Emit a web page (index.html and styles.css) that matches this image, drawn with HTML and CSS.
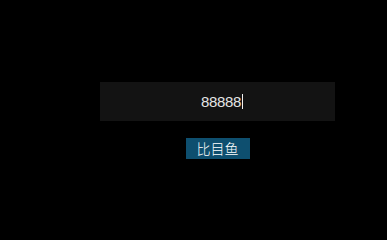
FILE: index.html
```html
<!DOCTYPE html>
<html lang="zh">
<head>
<meta charset="utf-8">
<link rel="stylesheet" href="styles.css">
</head>
<body>
<div class="wrap">
  <div class="field"><span class="value">88888</span><span class="caret"></span></div>
  <div class="actions"><button class="btn">比目鱼</button></div>
</div>
</body>
</html>
```
FILE: styles.css
```css
html, body {
  margin: 0;
  padding: 0;
  background: #000;
  width: 387px;
  height: 219px;
  overflow: hidden;
}
.wrap {
  padding: 82px 0 0 100px;
  width: 235px;
  display: flex;
  flex-direction: column;
}
.field {
  width: 235px;
  height: 39px;
  background: #131313;
  display: flex;
  align-items: center;
  justify-content: center;
  padding-left: 9px;
  box-sizing: border-box;
  font-family: "Liberation Sans", "Noto Sans CJK SC", sans-serif;
  font-size: 15px;
  color: #e4e4e4;
}
.value {
  letter-spacing: -0.3px;
}
.caret {
  display: inline-block;
  width: 1px;
  height: 15px;
  background: #f0f0f0;
  margin-left: 1px;
}
.actions {
  display: flex;
  justify-content: center;
  margin-top: 17px;
}
.btn {
  background: #0e4f6f;
  color: #fff;
  border: 0;
  border-radius: 0;
  height: 21px;
  width: 64px;
  padding: 0;
  font-family: "Noto Sans CJK SC", sans-serif;
  font-size: 14px;
  font-weight: 300;
  line-height: 21px;
}
```
